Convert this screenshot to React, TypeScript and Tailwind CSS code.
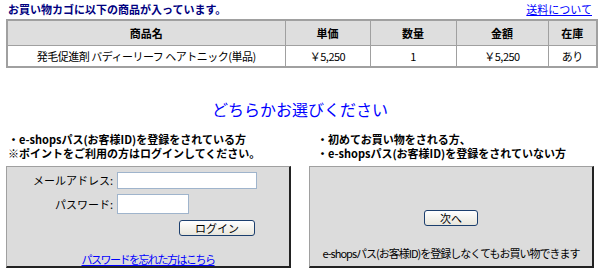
const font = { fontFamily: '"Noto Sans CJK JP", "Noto Sans", sans-serif' };

function Cell({ children, head }: { children: React.ReactNode; head?: boolean }) {
  return head ? (
    <th className="border border-[#a0a0a0] text-[11px] font-bold text-black text-center">{children}</th>
  ) : (
    <td className="border border-[#a0a0a0] text-[11px] text-black text-center tracking-[-0.5px]">{children}</td>
  );
}

export default function App() {
  return (
    <div className="w-[600px] h-[275px] bg-white overflow-hidden" style={font}>
      {/* Header */}
      <div className="flex items-end justify-between pl-[8px] pr-[8px] h-[18px]">
        <span className="text-[11px] font-bold text-[#000080] leading-none pb-[3px]">お買い物カゴに以下の商品が入っています。</span>
        <a href="#" className="text-[11px] text-[#0000ff] underline leading-none pb-[3px]">送料について</a>
      </div>

      {/* Cart table */}
      <div className="px-[6px] pt-[1px]">
        <table className="w-[590px] border-collapse border-2 border-[#a0a0a0] table-fixed">
          <colgroup>
            <col className="w-[278px]" />
            <col className="w-[85px]" />
            <col className="w-[86px]" />
            <col className="w-[92px]" />
            <col className="w-[49px]" />
          </colgroup>
          <thead>
            <tr className="bg-[#dedede] h-[25px]">
              <Cell head>商品名</Cell>
              <Cell head>単価</Cell>
              <Cell head>数量</Cell>
              <Cell head>金額</Cell>
              <Cell head>在庫</Cell>
            </tr>
          </thead>
          <tbody>
            <tr className="h-[22px]">
              <Cell>発毛促進剤 バディーリーフ ヘアトニック(単品)</Cell>
              <Cell>￥5,250</Cell>
              <Cell>1</Cell>
              <Cell>￥5,250</Cell>
              <Cell>あり</Cell>
            </tr>
          </tbody>
        </table>
      </div>

      {/* Title */}
      <div className="pt-[31px] text-center text-[16px] leading-[20px] text-[#0000ff]">どちらかお選びください</div>

      {/* Two choices */}
      <div className="flex gap-[18px] px-[6px] pt-[13px]">
        <div className="w-[286px] flex flex-col">
          <div className="pl-[2px] text-[11px] font-bold text-black h-[34px]">
            <div className="leading-[14px] h-[14px]">・e-shopsパス(お客様ID)を登録をされている方</div>
            <div className="leading-[14px] h-[14px]">※ポイントをご利用の方はログインしてください。</div>
          </div>
          <div className="h-[102px] bg-[#dcdcdc] border-t border-l border-[#a0a0a0] border-r-2 border-b-2 border-r-[#222] border-b-[#222] flex flex-col">
            <div className="flex items-center mt-[5px] h-[17px]">
              <span className="w-[108px] text-right text-[11px] leading-none text-black pr-[2px]">メールアドレス:</span>
              <input className="block ml-[2px] w-[140px] h-[17px] bg-white border border-[#9fb4cc] outline-none" />
            </div>
            <div className="flex items-center mt-[5px] h-[20px]">
              <span className="w-[108px] text-right text-[11px] leading-none text-black pr-[2px]">パスワード:</span>
              <input type="password" className="block ml-[2px] w-[72px] h-[20px] bg-white border border-[#9fb4cc] outline-none" />
            </div>
            <div className="flex mt-[6px] pl-[172px] h-[16px]">
              <button className="block w-[76px] h-[16px] rounded-[3px] border border-[#1c3f6e] bg-gradient-to-b from-white to-[#e8e6dc] text-[11px] leading-none text-black">ログイン</button>
            </div>
            <div className="text-center mt-[15px] h-[12px] leading-[12px]">
              <a href="#" className="text-[11px] leading-[12px] text-[#0000ff] underline tracking-[-1.5px]">パスワードを忘れた方はこちら</a>
            </div>
          </div>
        </div>

        <div className="w-[286px] flex flex-col">
          <div className="pl-[8px] text-[11px] font-bold text-black h-[34px]">
            <div className="leading-[14px] h-[14px]">・初めてお買い物をされる方、</div>
            <div className="leading-[14px] h-[14px]">・e-shopsパス(お客様ID)を登録をされていない方</div>
          </div>
          <div className="h-[102px] bg-[#dcdcdc] border-t border-l border-[#a0a0a0] border-r-2 border-b-2 border-r-[#222] border-b-[#222] flex flex-col items-center">
            <button className="block mt-[43px] w-[54px] h-[16px] rounded-[3px] border border-[#1c3f6e] bg-gradient-to-b from-white to-[#e8e6dc] text-[11px] leading-none text-black">次へ</button>
            <div className="mt-[21px] h-[12px] text-[11px] leading-[12px] text-black tracking-[-1px] whitespace-nowrap">e-shopsパス(お客様ID)を登録しなくてもお買い物できます</div>
          </div>
        </div>
      </div>
    </div>
  );
}
